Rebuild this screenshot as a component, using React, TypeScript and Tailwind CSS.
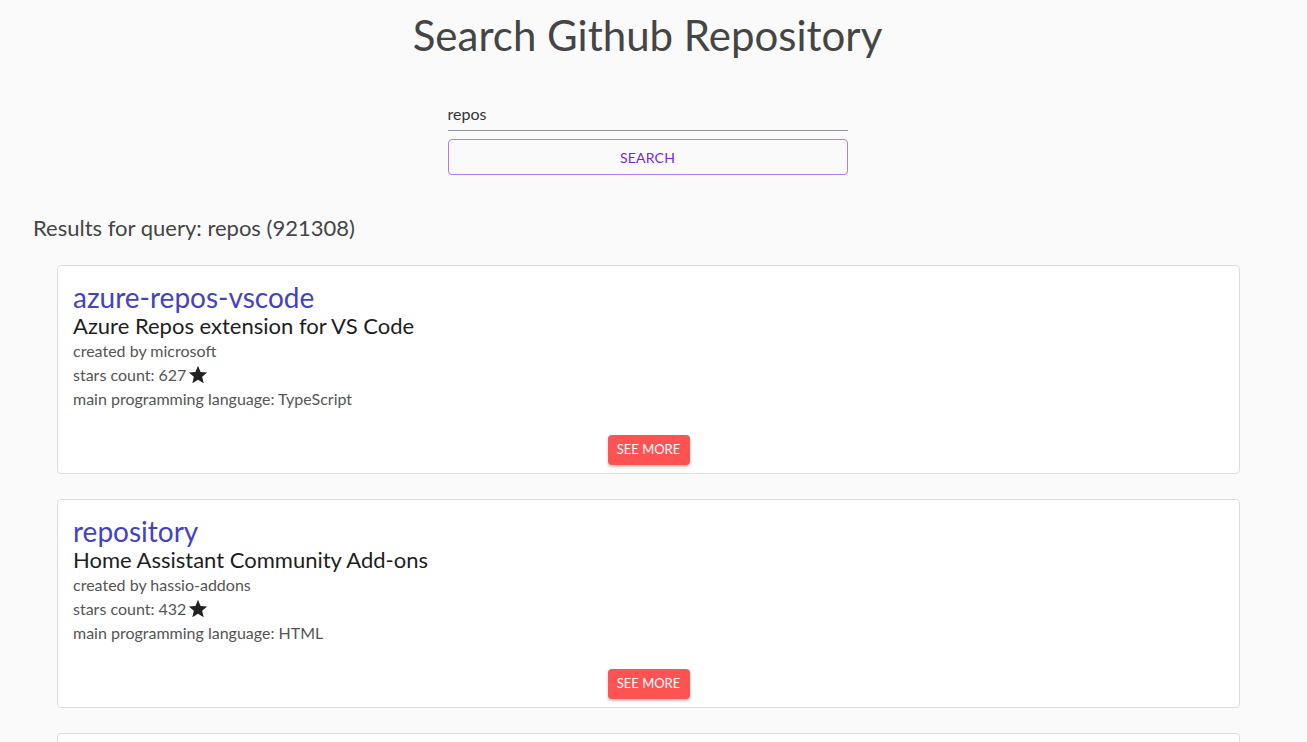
import React from "react";

const repos = [
  {
    name: "azure-repos-vscode",
    desc: "Azure Repos extension for VS Code",
    owner: "microsoft",
    stars: 627,
    lang: "TypeScript",
  },
  {
    name: "repository",
    desc: "Home Assistant Community Add-ons",
    owner: "hassio-addons",
    stars: 432,
    lang: "HTML",
  },
  {
    name: "repos",
    desc: "A collection of repositories",
    owner: "someone",
    stars: 300,
    lang: "JavaScript",
  },
];

function Star() {
  return (
    <svg width="22" height="22" viewBox="0 0 24 24" className="inline-block ml-[1px] -mt-[4px]" fill="#222">
      <path d="M12 17.27L18.18 21l-1.64-7.03L22 9.24l-7.19-.61L12 2 9.19 8.63 2 9.24l5.46 4.73L5.82 21z" />
    </svg>
  );
}

export default function App() {
  return (
    <div className="h-[742px] bg-[#fafafa] overflow-hidden" style={{ fontFamily: "Lato, 'Open Sans', sans-serif" }}>
      <div className="w-[1295px]">
        <h1 className="pt-[9px] text-center text-[42px] leading-[52px] text-[#454545] font-normal">
          Search Github Repository
        </h1>
        <div className="mx-auto w-[400px] mt-[37px]">
          <div className="h-[33px] border-b border-[#949494] flex items-end pb-[6px]">
            <span className="text-[16px] leading-[20px] text-[#333]">repos</span>
          </div>
          <div className="mt-[8px] h-[36px] border border-[#b07cf2] rounded-[4px] flex items-center justify-center text-[14px] text-[#7a1fe6] tracking-[0.2px]">
            SEARCH
          </div>
        </div>
        <div className="pl-[33px] mt-[39px] text-[22px] leading-[28px] text-[#454545]">
          Results for query: repos (921308)
        </div>
        <div className="ml-[57px] w-[1183px] mt-[23px] flex flex-col gap-[25px]">
          {repos.map((r) => (
            <div key={r.name} className="bg-white border border-[#dedede] rounded-[4px]">
              <div className="pt-[16px] px-[15px] pb-[16px]">
                <div className="text-[28px] leading-[31px] text-[#4343c2]">{r.name}</div>
                <div className="text-[22px] leading-[26px] text-[#1e1e1e]">{r.desc}</div>
                <div className="text-[16px] leading-[24px] text-[#555]">created by {r.owner}</div>
                <div className="text-[16px] leading-[24px] text-[#555]">
                  stars count: {r.stars}
                  <Star />
                </div>
                <div className="text-[16px] leading-[24px] text-[#555]">main programming language: {r.lang}</div>
              </div>
              <div className="p-[8px] flex justify-center">
                <div className="h-[30px] w-[82px] rounded-[4px] bg-[#ff5252] text-white text-[13px] flex items-center justify-center shadow-[0_2px_3px_rgba(0,0,0,0.25)]">
                  SEE MORE
                </div>
              </div>
            </div>
          ))}
        </div>
      </div>
    </div>
  );
}
